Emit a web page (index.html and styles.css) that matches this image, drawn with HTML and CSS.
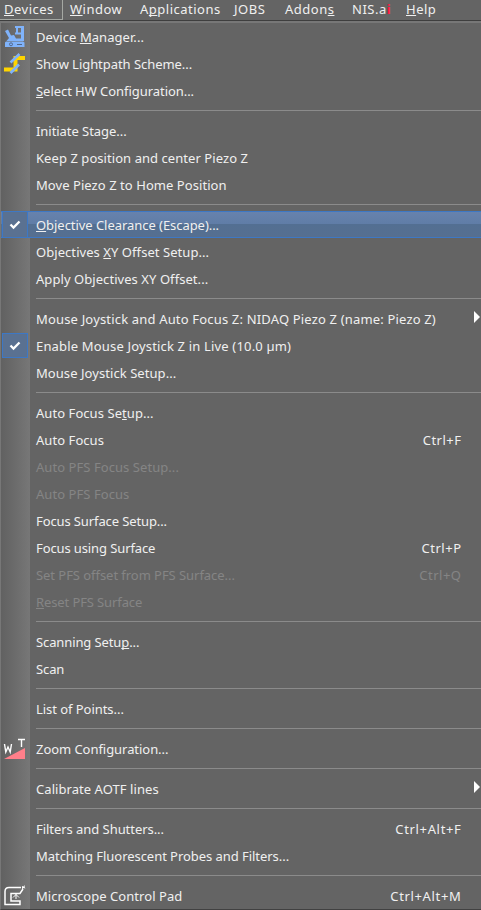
FILE: index.html
```html
<!DOCTYPE html>
<html lang="en">
<head>
<meta charset="utf-8">
<title>Devices</title>
<link rel="stylesheet" href="styles.css">
</head>
<body>
<nav class="menubar">
  <span class="tab tab-open"><u>D</u>evices</span>
  <span class="tab tab-window"><u>W</u>indow</span>
  <span class="tab tab-applications">A<u>p</u>plications</span>
  <span class="tab tab-jobs">JOBS</span>
  <span class="tab tab-addons">Addon<u>s</u></span>
  <span class="tab tab-nis">NIS.a<b>i</b></span>
  <span class="tab tab-help"><u>H</u>elp</span>
</nav>
<main class="menu">
  <div class="item"><span class="gutter"><svg class="icon" width="24" height="27" viewBox="0 0 24 27"><path fill="#80b3fa" d="M12 3h9v15H10l-1 0H3.500L6 15 2 8l3-1.500 3 6 3-.500 2 3.500h5v-4h-6V9.500h1V5h-1zM15 5v4.500h3V5zM3 18.500h17l1.500 1V24H2v-4.500z"/><circle cx="8" cy="21.300" r="1.500" fill="#80b3fa" stroke="#526789"/><path stroke="#526789" d="M14 21.500h5"/></svg></span><span class="label">Device <u>M</u>anager...</span></div>
  <div class="item"><span class="gutter"><svg class="icon" width="24" height="27" viewBox="0 0 24 27"><path fill="none" stroke="#ffd500" stroke-width="4" d="M1 19.500h11.500V8H22"/><path stroke="#80b3fa" stroke-width="2.600" d="M7.500 12.500l9-8.500M7.500 23l8.500-8.500"/></svg></span><span class="label snug">Show Lightpath Scheme...</span></div>
  <div class="item"><span class="label snug"><u>S</u>elect HW Configuration...</span></div>
  <div class="separator"></div>
  <div class="item"><span class="label snug">Initiate Stage...</span></div>
  <div class="item"><span class="label">Keep Z position and center Piezo Z</span></div>
  <div class="item"><span class="label">Move Piezo Z to Home Position</span></div>
  <div class="separator"></div>
  <div class="item selected"><span class="gutter checked"><svg width="12" height="10" viewBox="0 0 12 10"><path d="M1.500 4.500l3 3 6-6"/></svg></span><span class="label snug"><u>O</u>bjective Clearance (Escape)...</span></div>
  <div class="item"><span class="label">Objectives <u>X</u>Y Offset Setup...</span></div>
  <div class="item"><span class="label">Apply Objectives XY Offset...</span></div>
  <div class="separator"></div>
  <div class="item"><span class="label loose">Mouse Joystick and Auto Focus Z: NIDAQ Piezo Z (name: Piezo Z)</span><i class="arrow"></i></div>
  <div class="item"><span class="gutter checked"><svg width="12" height="10" viewBox="0 0 12 10"><path d="M1.500 4.500l3 3 6-6"/></svg></span><span class="label loose">Enable Mouse Joystick Z in Live (10.0 µm)</span></div>
  <div class="item"><span class="label">Mouse Joystick Setup...</span></div>
  <div class="separator"></div>
  <div class="item"><span class="label">Auto Focus Se<u>t</u>up...</span></div>
  <div class="item"><span class="label">Auto Focus</span><span class="shortcut">Ctrl+F</span></div>
  <div class="item disabled"><span class="label">Auto PFS Focus Setup...</span></div>
  <div class="item disabled"><span class="label">Auto PFS Focus</span></div>
  <div class="item"><span class="label tight">Focus Surface Setup...</span></div>
  <div class="item"><span class="label tight">Focus using Surface</span><span class="shortcut">Ctrl+P</span></div>
  <div class="item disabled"><span class="label snug">Set PFS offset from PFS Surface...</span><span class="shortcut">Ctrl+Q</span></div>
  <div class="item disabled"><span class="label tight"><u>R</u>eset PFS Surface</span></div>
  <div class="separator"></div>
  <div class="item"><span class="label tight">Scanning Setu<u>p</u>...</span></div>
  <div class="item"><span class="label tight">Scan</span></div>
  <div class="separator"></div>
  <div class="item"><span class="label snug">List of Points...</span></div>
  <div class="separator"></div>
  <div class="item"><span class="gutter"><svg class="icon" width="24" height="27" viewBox="0 0 24 27"><path fill="#ff7f8a" d="M1 24L22 13v11z"/><path fill="none" stroke="#fff" stroke-width="1.400" d="M1.500 9l1.300 8L5 12l2.200 5L8.500 9M15 4.500h7M18.500 4.500V12"/></svg></span><span class="label snug">Zoom Configuration...</span></div>
  <div class="separator"></div>
  <div class="item"><span class="label">Calibrate AOTF lines</span><i class="arrow"></i></div>
  <div class="separator"></div>
  <div class="item"><span class="label snug">Filters and Shutters...</span><span class="shortcut wide">Ctrl+Alt+F</span></div>
  <div class="item"><span class="label snug">Matching Fluorescent Probes and Filters...</span></div>
  <div class="separator"></div>
  <div class="item"><span class="gutter"><svg class="icon" width="24" height="27" viewBox="0 0 24 27"><path fill="none" stroke="#fff" stroke-width="1.500" d="M18 5.500H6Q2 5.500 2 9.500V22.500H17V19H8V11.500H17L20 7"/><path fill="none" stroke="#fff" d="M13 12v5M10 15.500l3-3 3 3"/><path fill="#fff" d="M19 4l1.500.500L22 3l-.500 2 1 1.500-2-.500L19 7.500z"/></svg></span><span class="label">Microscope Control Pad</span><span class="shortcut wide">Ctrl+Alt+M</span></div>
</main>
</body>
</html>
```
FILE: styles.css
```css
* { box-sizing: border-box; }
body {
  margin: 0;
  width: 481px;
  height: 910px;
  overflow: hidden;
  background: #646464;
  color: #f0f0f0;
  font: 13px/20px "Noto Sans", sans-serif;
}
u {
  text-decoration: underline 1px;
  text-underline-offset: 1px;
  text-decoration-skip-ink: none;
}
.menubar {
  display: flex;
  height: 21px;
  border-bottom: 1px solid #3e3e3e;
  line-height: 18px;
  letter-spacing: 0.5px;
}
.tab { flex: none; white-space: nowrap; }
.tab-open {
  width: 63px;
  padding-left: 4px;
  border-right: 1px solid #a5a8a3;
  border-bottom: 1px solid #a5a8a3;
}
.tab-window { width: 77px; padding-left: 7px; }
.tab-applications { width: 94px; }
.tab-jobs { width: 51px; }
.tab-addons { width: 67px; }
.tab-nis { width: 54px; }
.tab-nis b { color: #ff173f; font-weight: 700; }
.menu {
  height: 889px;
  border-top: 2px solid #777;
  border-left: 1px solid #777;
  border-bottom: 1px solid #414141;
  background: linear-gradient(90deg, #616161, #777) 0 0 / 29px 100% no-repeat #646464;
}
.item {
  display: flex;
  height: 27px;
  align-items: center;
  padding-left: 35px;
  white-space: nowrap;
}
.item:has(.gutter) { padding-left: 0; }
.gutter {
  display: flex;
  flex: none;
  width: 27px;
  height: 25px;
  margin-right: 8px;
  align-items: center;
}
.icon { flex: none; margin-left: 2px; }
.checked {
  justify-content: center;
  margin-left: 1px;
  width: 26px;
  border: 1px solid #3d78c5;
  background: #5a7191;
}
.checked path { fill: none; stroke: #fff; stroke-width: 2.3; }
.selected {
  border-top: 1px solid #3d78c5;
  border-bottom: 1px solid #3d78c5;
  background: linear-gradient(#6782ad, #607da7 46%, #536f92 50%, #566f90);
}
.selected .checked { border-top: 0; border-bottom: 0; }
.label, .shortcut { padding-top: 1px; }
.label { letter-spacing: 0.06px; }
.loose { letter-spacing: 0.17px; }
.snug { letter-spacing: -0.05px; }
.tight { letter-spacing: -0.11px; }
.disabled { color: #858585; }
.shortcut { margin-left: auto; margin-right: 19.5px; letter-spacing: 0.5px; }
.wide { letter-spacing: 0.66px; }
.arrow {
  margin: 0 1px 3px auto;
  border-left: 6px solid #fff;
  border-top: 6px solid transparent;
  border-bottom: 6px solid transparent;
}
.separator {
  height: 13px;
  padding: 6px 0 6px 35px;
}
.separator::before {
  content: "";
  display: block;
  height: 1px;
  background: #8b8b8b;
}
```
